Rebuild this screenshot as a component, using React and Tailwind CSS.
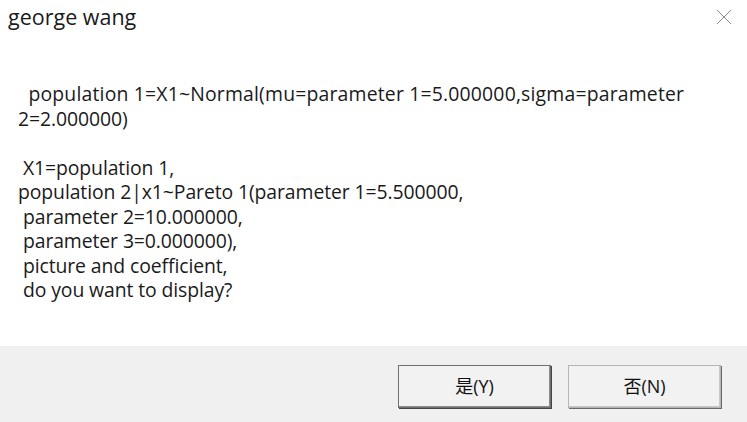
export default function App() {
  const lines = [
    "  population 1=X1~Normal(mu=parameter 1=5.000000,sigma=parameter",
    "2=2.000000)",
    "",
    " X1=population 1,",
    "population 2|x1~Pareto 1(parameter 1=5.500000,",
    " parameter 2=10.000000,",
    " parameter 3=0.000000),",
    " picture and coefficient,",
    " do you want to display?",
  ];
  return (
    <div className="w-[747px] h-[422px] bg-white flex flex-col overflow-hidden text-[#1a1a1a]" style={{ fontFamily: '"Open Sans", "Noto Sans CJK TC", sans-serif' }}>
      <div className="h-[36px] flex items-start justify-between shrink-0">
        <div className="pl-[8px] pt-[3px] text-[21.5px] leading-[28px]">george wang</div>
        <div className="pr-[15px] pt-[9px]">
          <svg width="16" height="16" viewBox="0 0 16 16">
            <path d="M1 1 L15 15 M15 1 L1 15" stroke="#8a8a8a" strokeWidth="1" fill="none" />
          </svg>
        </div>
      </div>
      <div className="flex-1 pl-[18px] pt-[46px]">
        {lines.map((l, i) => (
          <div key={i} className={"whitespace-pre text-[19.4px] leading-[24.5px] h-[24.5px] " + (i === 0 ? "tracking-[0.18px]" : "tracking-[-0.1px]")}>{l}</div>
        ))}
      </div>
      <div className="h-[76px] bg-[#f0f0f0] shrink-0 flex items-start justify-end gap-[17px] pr-[26px] pt-[19px]">
        <button className="w-[153px] h-[43px] bg-[#f2f2f2] border border-[#6f6f6f] shadow-[inset_-1px_-1px_0_#8a8a8a,1px_1px_0_#444] text-[18px] text-[#111]">是(Y)</button>
        <button className="w-[153px] h-[43px] bg-[#f2f2f2] border border-[#b5b5b5] shadow-[inset_-1px_-1px_0_#c8c8c8,1px_1px_0_#6a6a6a] text-[18px] text-[#111]">否(N)</button>
      </div>
    </div>
  );
}
